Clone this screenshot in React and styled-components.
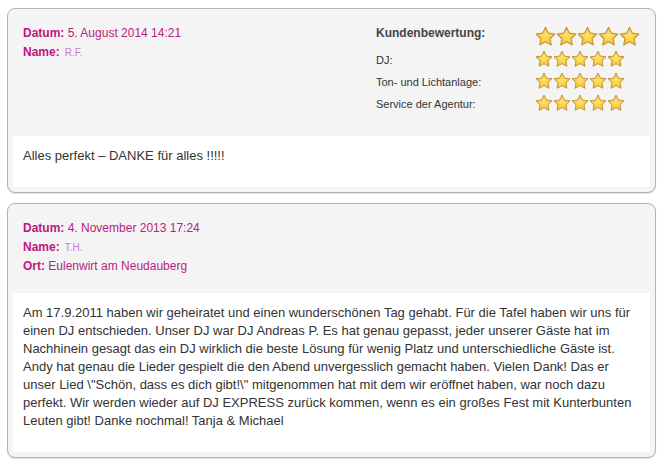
import styled, { createGlobalStyle } from 'styled-components';

const GlobalStyle = createGlobalStyle`
  body {
    margin: 0;
    background: #fff;
    font-family: Arial, "Liberation Sans", sans-serif;
  }
`;

const REVIEWS = [
  {
    date: '5. August 2014 14:21',
    name: 'R.F.',
    rating: { total: 5, dj: 5, technik: 5, service: 5 },
    text: 'Alles perfekt – DANKE für alles !!!!!',
  },
  {
    date: '4. November 2013 17:24',
    name: 'T.H.',
    place: 'Eulenwirt am Neudauberg',
    text:
      'Am 17.9.2011 haben wir geheiratet und einen wunderschönen Tag gehabt. Für die Tafel haben wir uns für einen DJ entschieden. Unser DJ war DJ Andreas P. Es hat genau gepasst, jeder unserer Gäste hat im Nachhinein gesagt das ein DJ wirklich die beste Lösung für wenig Platz und unterschiedliche Gäste ist. Andy hat genau die Lieder gespielt die den Abend unvergesslich gemacht haben. Vielen Dank! Das er unser Lied \\"Schön, dass es dich gibt!\\" mitgenommen hat mit dem wir eröffnet haben, war noch dazu perfekt. Wir werden wieder auf DJ EXPRESS zurück kommen, wenn es ein großes Fest mit Kunterbunten Leuten gibt! Danke nochmal! Tanja & Michael',
  },
];

const Page = styled.div`
  padding: 8px 8px 0 7px;
`;

const Card = styled.div`
  margin-bottom: 10px;
  padding: 0 5px 5px;
  background: #f4f4f4;
  border: 1px solid #b3b3b3;
  border-radius: 8px;
  box-shadow: 0 1px 1px rgba(0, 0, 0, 0.12);
`;

const Header = styled.div`
  display: flex;
  justify-content: space-between;
  align-items: flex-start;
  padding: 15px 10px 17px 10px;
`;

const Meta = styled.div`
  font-size: 12px;
  line-height: 19px;
  color: #b8227f;
`;

const Label = styled.b`
  color: #c0157f;
`;

const NameValue = styled.span`
  margin-left: 5px;
  font-size: 10px;
  color: #c37bcf;
`;

const Rating = styled.div`
  display: grid;
  grid-template-columns: 159px auto;
  grid-template-rows: 24px 22px 22px 22px;
  align-items: center;
  margin-bottom: 5px;
`;

const RatingTitle = styled.div`
  align-self: start;
  font-size: 12px;
  font-weight: bold;
  line-height: 18px;
  color: #444;
`;

const RatingLabel = styled.div`
  padding-top: 2px;
  font-size: 11px;
  color: #333;
`;

const Stars = styled.div`
  display: flex;
  align-self: ${(props) => (props.big ? 'start' : 'center')};
  margin-top: ${(props) => (props.big ? '2px' : '0')};
`;

const Body = styled.div`
  padding: 11px 10px 22px;
  background: #fff;
  font-size: 13px;
  line-height: 18px;
  color: #333;
`;

function Star({ size }) {
  return (
    <svg width={size} height={size} viewBox="0 0 20 20">
      <defs>
        <radialGradient id="starFill" cx="50%" cy="45%" r="60%">
          <stop offset="0%" stopColor="#fde27a" />
          <stop offset="60%" stopColor="#f8cf3d" />
          <stop offset="100%" stopColor="#f1b923" />
        </radialGradient>
      </defs>
      <path
        d="M10 1.2 L12.7 6.8 L18.9 7.6 L14.4 11.9 L15.5 18.1 L10 15.1 L4.5 18.1 L5.6 11.9 L1.1 7.6 L7.3 6.8 Z"
        fill="url(#starFill)"
        stroke="#c3953a"
        strokeWidth="1.1"
        strokeLinejoin="round"
      />
    </svg>
  );
}

function StarRow({ count, big }) {
  return (
    <Stars big={big}>
      {Array.from({ length: count }).map((_, i) => (
        <Star key={i} size={big ? 21 : 18} />
      ))}
    </Stars>
  );
}

function Review({ review }) {
  const { date, name, place, rating, text } = review;
  return (
    <Card>
      <Header>
        <Meta>
          <div>
            <Label>Datum:</Label> {date}
          </div>
          <div>
            <Label>Name:</Label>
            <NameValue>{name}</NameValue>
          </div>
          {place && (
            <div>
              <Label>Ort:</Label> {place}
            </div>
          )}
        </Meta>
        {rating && (
          <Rating>
            <RatingTitle>Kundenbewertung:</RatingTitle>
            <StarRow count={rating.total} big />
            <RatingLabel>DJ:</RatingLabel>
            <StarRow count={rating.dj} />
            <RatingLabel>Ton- und Lichtanlage:</RatingLabel>
            <StarRow count={rating.technik} />
            <RatingLabel>Service der Agentur:</RatingLabel>
            <StarRow count={rating.service} />
          </Rating>
        )}
      </Header>
      <Body>{text}</Body>
    </Card>
  );
}

export default function App() {
  return (
    <>
      <GlobalStyle />
      <Page>
        {REVIEWS.map((r, i) => (
          <Review key={i} review={r} />
        ))}
      </Page>
    </>
  );
}
